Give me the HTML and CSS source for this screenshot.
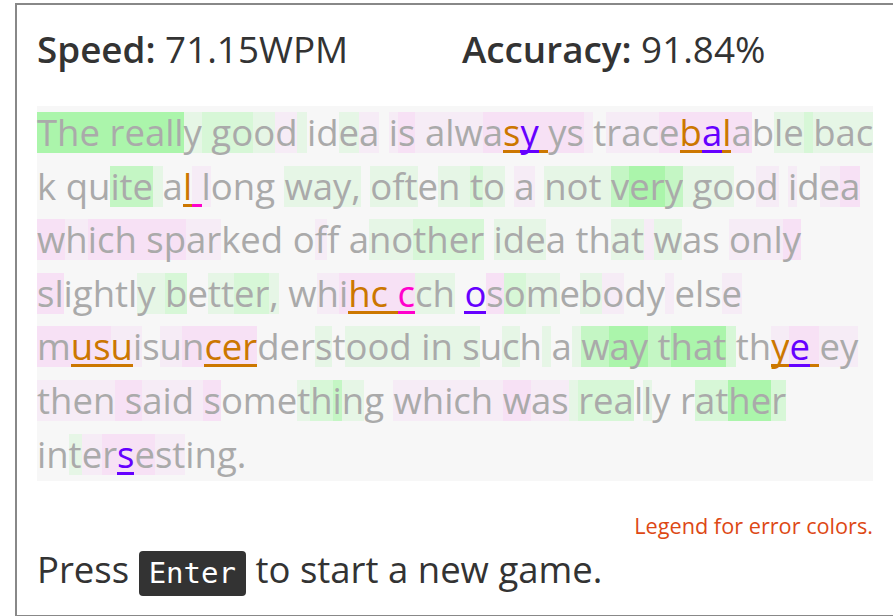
FILE: index.html
```html
<!DOCTYPE html>
<html lang="en">
<head>
<meta charset="utf-8">
<title>Typing game</title>
<link rel="stylesheet" href="styles.css">
</head>
<body>
<main class="game">
  <div class="stats">
    <div class="stat"><span class="label">Speed:</span> 71.15WPM</div>
    <div class="stat"><span class="label">Accuracy:</span> 91.84%</div>
  </div>
  <div class="text">
<div class="ln"><span class="g1">The reall</span><span class="g4">y</span><span class="g3"> go</span><span class="g4">o</span><span class="p2">d</span><span class="g4"> </span>id<span class="g4">e</span><span class="p2">a</span> <span class="p2">i</span><span class="p1">s</span><span class="p2"> alw</span><span class="p1">a</span><span class="p1 eo">s</span><span class="p1 ep">y</span><span class="p1 eo"> </span><span class="p1">ys</span><span class="p2"> </span>t<span class="p2">rac</span><span class="p1">e</span><span class="p1 eo">b</span><span class="p1 ep">a</span><span class="p1 eo">l</span><span class="p1">a</span>b<span class="g4">le</span><span class="g3"> </span><span class="g4">bac</span></div>
<div class="ln">k qu<span class="g2">ite</span><span class="g4"> </span>a<span class="eo">l</span><span class="p2 em"> </span><span class="p2">l</span>ong <span class="g4">way,</span> <span class="g4">oft</span>e<span class="g4">n </span><span class="g3">t</span><span class="g4">o</span> <span class="p2">a</span> <span class="g4">not </span><span class="g2">v</span><span class="g1">er</span><span class="g2">y</span><span class="g4"> go</span>o<span class="p2">d</span> <span class="p2">i</span>d<span class="p2">e</span><span class="p1">a</span></div>
<div class="ln"><span class="p1">w</span><span class="p2">h</span><span class="p1">ich sp</span><span class="p2">ar</span>ked o<span class="p2">f</span>f a<span class="g4">no</span><span class="g3">ther</span> <span class="g4">ide</span>a th<span class="g4">at</span><span class="p2"> </span><span class="g4">w</span>as <span class="p2">onl</span><span class="p1">y</span></div>
<div class="ln"><span class="p1">sl</span>ightl<span class="g4">y </span><span class="g3">b</span>e<span class="g4">tt</span><span class="g3">er</span><span class="g4">,</span> w<span class="p2">h</span><span class="p1">i</span><span class="p1 eo">hc </span><span class="p1 em">c</span><span class="g4">ch</span> <span class="ep">o</span><span class="p1">s</span><span class="g3">o</span><span class="g4">m</span>e<span class="g4">b</span><span class="p2">o</span>dy<span class="p2"> </span>els<span class="p2">e</span></div>
<div class="ln"><span class="p1">m</span><span class="p1 eo">us</span><span class="p2 eo">u</span><span class="p2">i</span>s<span class="p2">u</span><span class="p1">n</span><span class="p1 eo">cer</span>der<span class="g4">s</span>t<span class="g4">ood in s</span>u<span class="g4">c</span>h<span class="g4"> </span>a<span class="g4"> </span><span class="g2">w</span><span class="g1">ay</span><span class="g2"> t</span><span class="g1">hat</span><span class="g3"> </span>th<span class="p2 eo">y</span><span class="p1 ep">e</span><span class="p1 eo"> </span><span class="p2">ey</span></div>
<div class="ln"><span class="p2">then</span><span class="p1"> s</span><span class="p2">aid </span><span class="p1">s</span>ome<span class="g4">t</span><span class="g3">h</span><span class="g2">i</span><span class="g4">n</span>g <span class="p2">which </span><span class="p1">w</span><span class="p2">as</span><span class="g4"> </span><span class="g3">rea</span>l<span class="g4">l</span>y r<span class="g3">at</span><span class="g1">he</span><span class="g3">r</span></div>
<div class="ln">in<span class="g4">t</span><span class="p2">e</span><span class="p1">r</span><span class="p1 ep">s</span><span class="p1">e</span><span class="p2">st</span>ing.</div>
  </div>
  <div class="legend">Legend for error colors.</div>
  <div class="prompt">Press <kbd class="key">Enter</kbd> to start a new game.</div>
</main>
</body>
</html>
```

FILE: styles.css
```css
html {
  overflow: hidden;
}

body {
  margin: 0;
  background: #ffffff;
  font-family: "Open Sans", "Noto Sans", sans-serif;
  color: #333333;
}

.game {
  margin: 3px 0 0 15px;
  width: 836px;
  padding: 17px 20px 19px 20px;
  border: 2px solid #888888;
  background: #ffffff;
}

.stats {
  display: grid;
  grid-template-columns: 425px 1fr;
  font-size: 36.8px;
  line-height: 54px;
  margin-bottom: 30px;
  white-space: nowrap;
}

.label {
  font-weight: 600;
}

.text {
  background: #f7f7f7;
  color: #aaaaaa;
  font-size: 36.5px;
}

.ln {
  line-height: 53.6px;
  white-space: pre;
}

.ln span {
  display: inline-block;
  line-height: 41px;
  white-space: pre;
}

.g1 { background: #abf5ab; }
.g2 { background: #c4f6c4; }
.g3 { background: #d7f7d7; }
.g4 { background: #e6f6e6; }
.p1 { background: #f7e1f5; }
.p2 { background: #f6ecf6; }

.eo {
  color: #cc7700;
  box-shadow: inset 0 -3px 0 #cc7700;
}

.ep {
  color: #6600ff;
  box-shadow: inset 0 -3px 0 #6600ff;
}

.em {
  color: #ff00cc;
  box-shadow: inset 0 -3px 0 #ff00cc;
}

.legend {
  margin-top: 30px;
  text-align: right;
  font-size: 21.7px;
  line-height: 30px;
  color: #dd4814;
}

.prompt {
  margin-top: 1px;
  font-size: 36.5px;
  line-height: 54px;
  white-space: nowrap;
}

.key {
  display: inline-block;
  font-family: "DejaVu Sans Mono", "Liberation Mono", monospace;
  font-size: 29px;
  line-height: 45px;
  padding: 0 10px;
  background: #333333;
  color: #ffffff;
  border-radius: 4px;
}
```
